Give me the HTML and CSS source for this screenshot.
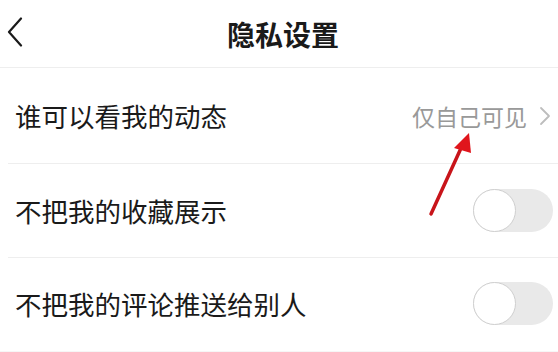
FILE: index.html
```html
<!DOCTYPE html>
<html lang="zh-CN">
<head>
<meta charset="utf-8">
<title>隐私设置</title>
<link rel="stylesheet" href="styles.css">
</head>
<body>
<div class="page">
  <header class="header">
    <span class="back">
      <svg width="18" height="30" viewBox="0 0 18 30"><path d="M15 1.5 L3 15 L15 28.5" fill="none" stroke="#1a1a1a" stroke-width="2.2" stroke-linecap="round" stroke-linejoin="round"/></svg>
    </span>
    <h1 class="title">隐私设置</h1>
  </header>
  <ul class="list">
    <li class="row row-1">
      <span class="label">谁可以看我的动态</span>
      <span class="value">仅自己可见
        <svg class="chev" width="12" height="20" viewBox="0 0 12 20"><path d="M2 2 L10 10 L2 18" fill="none" stroke="#bdbdbd" stroke-width="1.8" stroke-linecap="round" stroke-linejoin="round"/></svg>
      </span>
    </li>
    <li class="row row-2">
      <span class="label">不把我的收藏展示</span>
      <span class="toggle"><span class="knob"></span></span>
    </li>
    <li class="row row-3">
      <span class="label">不把我的评论推送给别人</span>
      <span class="toggle"><span class="knob"></span></span>
    </li>
  </ul>
  <div class="bottom"></div>
  <svg class="arrow" width="558" height="352" viewBox="0 0 558 352">
    <line x1="431" y1="214" x2="462" y2="146" stroke="#c8141a" stroke-width="3.5" stroke-linecap="round"/>
    <polygon points="469,133 454,148 471,153" fill="#e0151c"/>
  </svg>
</div>
</body>
</html>
```
FILE: styles.css
```css
* { box-sizing: border-box; }
html, body { margin: 0; padding: 0; background: #fff; }
body {
  width: 558px;
  height: 352px;
  overflow: hidden;
  font-family: "Noto Sans CJK SC", "Noto Sans", sans-serif;
  color: #1a1a1a;
}
.page { position: relative; width: 558px; height: 352px; }
.header {
  position: relative;
  height: 68px;
  border-bottom: 1px solid #eeeeee;
  display: flex;
  align-items: center;
  justify-content: center;
}
.back {
  position: absolute;
  left: 6px;
  top: 17px;
  display: flex;
}
.title {
  margin: 0;
  font-size: 28px;
  font-weight: 700;
  line-height: 1;
  letter-spacing: 0;
  padding-left: 8px;
}
.list { list-style: none; margin: 0; padding: 0; }
.row {
  display: flex;
  align-items: center;
  justify-content: space-between;
  padding: 0 5px 0 15px;
  position: relative;
}
.row::after {
  content: "";
  position: absolute;
  left: 8px;
  right: 0;
  bottom: 0;
  height: 1px;
  background: #eeeeee;
}
.row-1 { height: 96px; padding-right: 7px; }
.row-2 { height: 94px; }
.row-3 { height: 93px; }
.row-3::after { display: none; }
.label { font-size: 26.5px; line-height: 1; color: #1a1a1a; }
.value {
  display: flex;
  align-items: center;
  gap: 12px;
  font-size: 23px;
  color: #999999;
  line-height: 1;
}
.toggle {
  width: 80px;
  height: 43px;
  border-radius: 22px;
  background: #e9e9e9;
  display: flex;
  align-items: center;
  margin-top: -2px;
}
.knob {
  width: 43px;
  height: 43px;
  border-radius: 50%;
  background: #fff;
  border: 1.5px solid #cfcfcf;
}
.bottom { height: 3px; background: #f6f6f6; }
.arrow { position: absolute; left: 0; top: 0; pointer-events: none; }
```
